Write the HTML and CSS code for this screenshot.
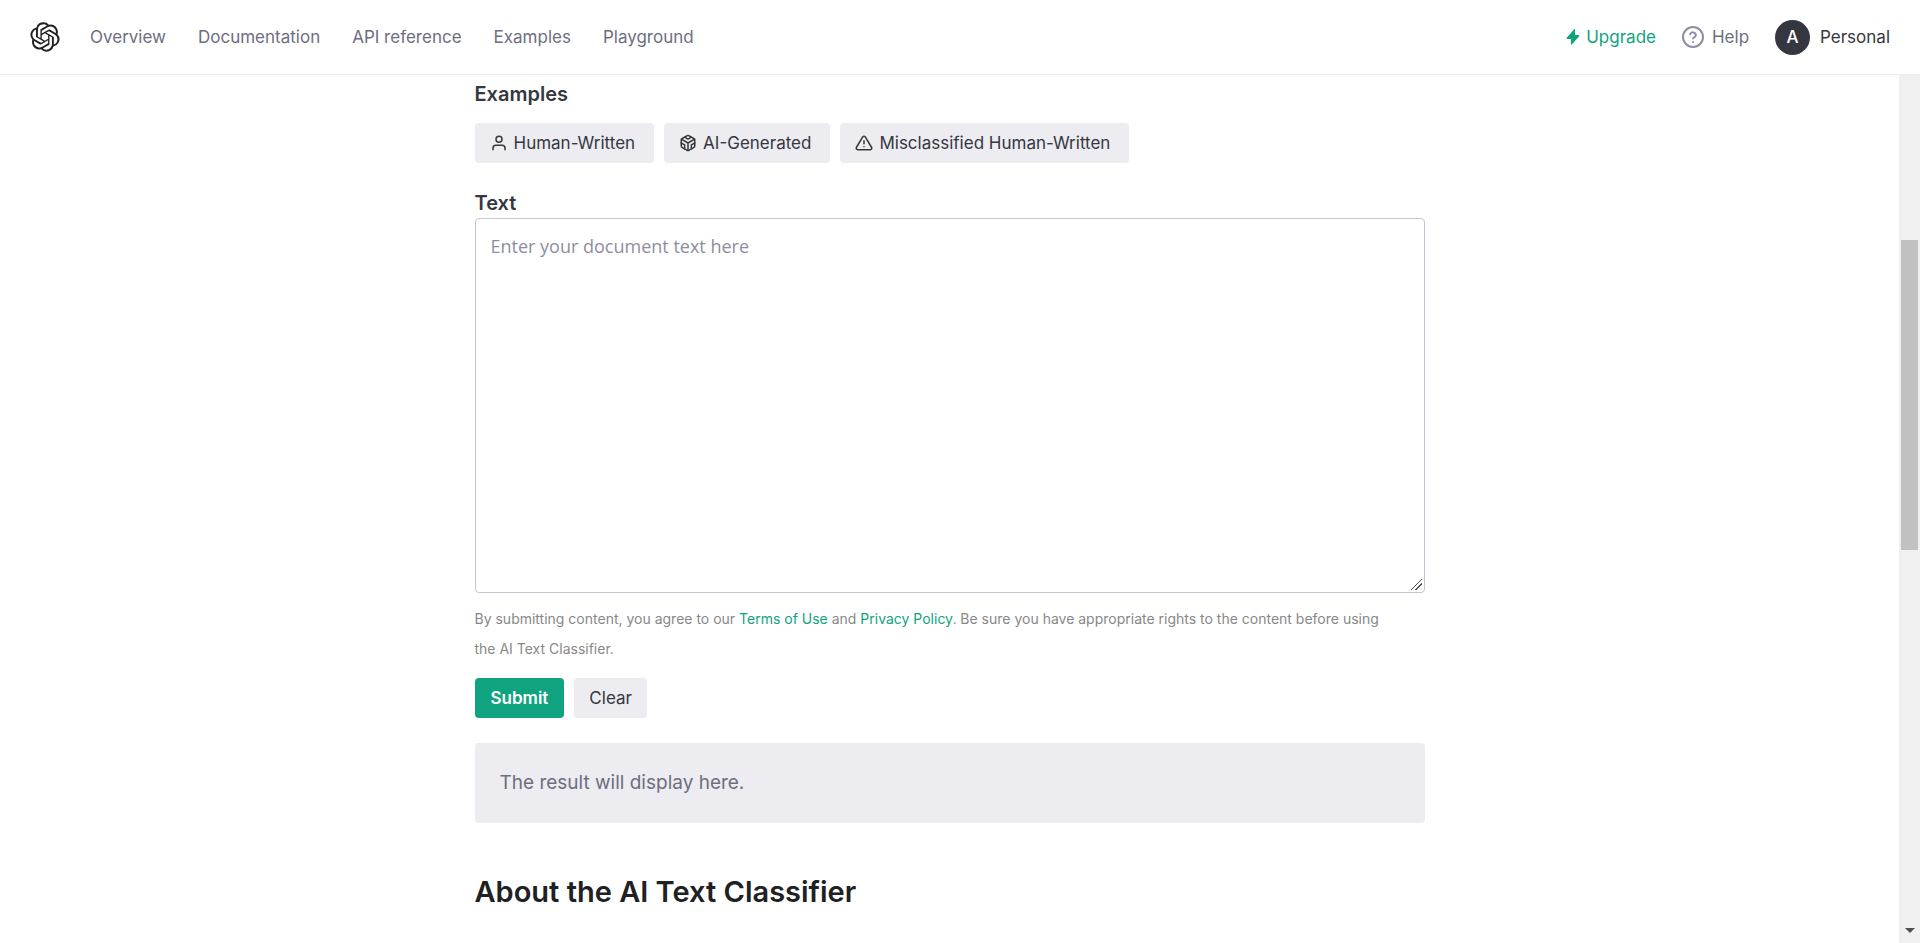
FILE: index.html
```html
<!DOCTYPE html>
<html lang="en">
<head>
  <meta charset="UTF-8" />
  <meta name="viewport" content="width=device-width, initial-scale=1.0"/>
  <title>AI Text Classifier - OpenAI API</title>
  <link rel="stylesheet" href="styles.css">
</head>
<body>
  <header class="topbar">
    <a href="#" class="logo" aria-label="OpenAI">
      <svg width="30" height="30" viewBox="0 0 41 41" fill="currentColor"><path d="M37.532 16.87a9.963 9.963 0 0 0-.856-8.184 10.078 10.078 0 0 0-10.855-4.835A9.964 9.964 0 0 0 18.306.5a10.079 10.079 0 0 0-9.614 6.977 9.967 9.967 0 0 0-6.664 4.834 10.08 10.08 0 0 0 1.24 11.817 9.965 9.965 0 0 0 .856 8.185 10.079 10.079 0 0 0 10.855 4.835 9.965 9.965 0 0 0 7.516 3.35 10.078 10.078 0 0 0 9.617-6.981 9.967 9.967 0 0 0 6.663-4.834 10.079 10.079 0 0 0-1.243-11.813zM22.498 37.886a7.474 7.474 0 0 1-4.799-1.735c.061-.033.168-.091.237-.134l7.964-4.6a1.294 1.294 0 0 0 .655-1.134V19.054l3.366 1.944a.12.12 0 0 1 .066.092v9.299a7.505 7.505 0 0 1-7.49 7.496zM6.392 31.006a7.471 7.471 0 0 1-.894-5.023c.06.036.162.099.237.141l7.964 4.6a1.297 1.297 0 0 0 1.308 0l9.724-5.614v3.888a.12.12 0 0 1-.048.103L16.632 33.75a7.504 7.504 0 0 1-10.24-2.744zM4.297 13.62A7.469 7.469 0 0 1 8.2 10.333c0 .068-.004.19-.004.274v9.201a1.294 1.294 0 0 0 .654 1.132l9.723 5.614-3.366 1.944a.12.12 0 0 1-.114.01L7.04 23.856a7.504 7.504 0 0 1-2.743-10.237zm27.658 6.437-9.724-5.615 3.367-1.943a.121.121 0 0 1 .113-.01l8.052 4.648a7.498 7.498 0 0 1-1.158 13.528v-9.476a1.293 1.293 0 0 0-.65-1.132zm3.35-5.043c-.059-.037-.162-.099-.236-.141l-7.965-4.6a1.298 1.298 0 0 0-1.308 0l-9.723 5.614v-3.888a.12.12 0 0 1 .048-.103l8.05-4.645a7.497 7.497 0 0 1 11.135 7.763zm-21.063 6.929-3.367-1.944a.12.12 0 0 1-.065-.092v-9.299a7.497 7.497 0 0 1 12.293-5.756 6.94 6.94 0 0 0-.236.134l-7.965 4.6a1.294 1.294 0 0 0-.654 1.132l-.006 11.225zm1.829-3.943 4.33-2.501 4.332 2.5v5l-4.331 2.5-4.331-2.5v-5z"/></svg>
    </a>
    <nav class="nav-links">
      <a href="#">Overview</a>
      <a href="#">Documentation</a>
      <a href="#">API reference</a>
      <a href="#">Examples</a>
      <a href="#">Playground</a>
    </nav>
    <div class="nav-right">
      <a href="#" class="upgrade">
        <svg width="14" height="16" viewBox="0 0 14 16" fill="currentColor"><path d="M8.2.2C8.6-.1 9 .1 9 .6V6h3.600c.7 0 1 .7.6 1.200L5.800 15.600c-.4.4-.8.2-.8-.3V10H1.300c-.7 0-1-.7-.6-1.200z"/></svg>
        Upgrade
      </a>
      <a href="#" class="help">
        <svg width="22" height="22" viewBox="0 0 22 22" fill="none" stroke="currentColor" stroke-width="2" stroke-linecap="round" stroke-linejoin="round"><circle cx="11" cy="11" r="10"/><path d="M8.200 8.200a2.900 2.900 0 0 1 5.600 1c0 1.900-2.800 2.500-2.800 3.400"/><path d="M11 15.900v.1"/></svg>
        Help
      </a>
      <button class="account"><span class="avatar">A</span>Personal</button>
    </div>
  </header>

  <div class="page">
    <main>
      <div class="content">
        <h2>Examples</h2>
        <div class="button-row examples">
          <button class="btn">
            <svg class="icon" viewBox="0 0 24 24"><path d="M20 21v-2a4 4 0 0 0-4-4H8a4 4 0 0 0-4 4v2"/><circle cx="12" cy="7" r="4"/></svg>
            Human-Written
          </button>
          <button class="btn">
            <svg class="icon" viewBox="0 0 24 24"><path d="M21 16V8a2 2 0 0 0-1-1.730l-7-4a2 2 0 0 0-2 0l-7 4A2 2 0 0 0 3 8v8a2 2 0 0 0 1 1.730l7 4a2 2 0 0 0 2 0l7-4A2 2 0 0 0 21 16z"/><path d="M7.500 4.210 12 6.810l4.500-2.600M7.500 19.790V14.600L3 12M21 12l-4.500 2.600v5.190M3.270 6.960 12 12.010l8.730-5.050M12 22.080V12"/></svg>
            AI-Generated
          </button>
          <button class="btn">
            <svg class="icon" viewBox="0 0 24 24"><path d="M10.290 3.860 1.820 18a2 2 0 0 0 1.710 3h16.940a2 2 0 0 0 1.710-3L13.710 3.860a2 2 0 0 0-3.420 0z"/><path d="M12 9v4M12 17h.01"/></svg>
            Misclassified Human-Written
          </button>
        </div>

        <label for="docText">Text</label>
        <textarea id="docText" placeholder="Enter your document text here"></textarea>
        <p class="terms">By submitting content, you agree to our <a href="#">Terms of Use</a> and <a href="#">Privacy Policy</a>. Be sure you have appropriate rights to the content before using the AI Text Classifier.</p>

        <div class="button-row">
          <button class="btn primary">Submit</button>
          <button class="btn">Clear</button>
        </div>

        <div class="result">The result will display here.</div>

        <h1>About the AI Text Classifier</h1>
      </div>
    </main>
    <div class="scrollbar">
      <div class="thumb"></div>
      <div class="arrow-down"></div>
    </div>
  </div>
</body>
</html>
```
FILE: styles.css
```css
* {
  box-sizing: border-box;
}

body {
  margin: 0;
  height: 100vh;
  display: flex;
  flex-direction: column;
  overflow: hidden;
  font-family: Inter, "Liberation Sans", sans-serif;
  font-size: 17px;
  color: #353740;
  background: #fff;
}

a {
  color: #10a37f;
  text-decoration: none;
}

button {
  font-family: inherit;
  font-size: inherit;
  color: inherit;
  border: none;
  cursor: pointer;
}

/* Top bar */
.topbar {
  flex: none;
  display: flex;
  align-items: center;
  height: 75px;
  padding: 0 30px;
  border-bottom: 1px solid #ececf1;
}

.logo {
  display: flex;
  margin-right: 30px;
  color: #202123;
}

.nav-links {
  display: flex;
  gap: 32px;
}

.nav-links a, .nav-right .help {
  color: #6e6e80;
}

.nav-right {
  display: flex;
  align-items: center;
  gap: 26px;
  margin-left: auto;
}

.upgrade, .help, .account {
  display: flex;
  align-items: center;
}

.upgrade { gap: 6px; }
.help { gap: 8px; }
.help svg { color: #8e8ea0; }

.account {
  gap: 10px;
  padding: 0;
  background: none;
}

.avatar {
  width: 35px;
  height: 35px;
  line-height: 35px;
  border-radius: 50%;
  background: #353740;
  color: #fff;
  font-size: 17px;
  font-weight: 500;
}

/* Page body */
.page {
  flex: 1;
  display: flex;
  min-height: 0;
}

main {
  flex: 1;
  overflow: hidden;
}

.content {
  max-width: 950px;
  margin: 0 auto;
}

h2, label {
  display: block;
  margin: 0;
  font-size: 20px;
  line-height: 30px;
  font-weight: 600;
}

h2 {
  padding-top: 4px;
}

.button-row {
  display: flex;
  gap: 10px;
}

.examples {
  margin: 14px 0 25px;
}

.btn {
  display: flex;
  align-items: center;
  gap: 6px;
  height: 40px;
  padding: 0 15px;
  border-radius: 4px;
  background: #ececf1;
}

.examples .btn {
  padding-right: 19px;
}

.btn.primary {
  padding: 0 16px;
  background: #10a37f;
  color: #fff;
  font-weight: 600;
}

.icon {
  width: 18px;
  height: 18px;
  fill: none;
  stroke: currentColor;
  stroke-width: 2;
  stroke-linecap: round;
  stroke-linejoin: round;
}

textarea {
  display: block;
  width: 100%;
  height: 375px;
  padding: 12px 15px;
  border: 1px solid #c5c5d2;
  border-radius: 4px;
  font-family: "Open Sans", sans-serif;
  font-size: 18px;
  line-height: 30px;
}

textarea::placeholder {
  color: #8e8ea0;
}

textarea::-webkit-resizer {
  background: linear-gradient(135deg, transparent 46%, #505050 46%, #505050 54%, transparent 54%, transparent 68%, #505050 68%, #505050 76%, transparent 76%) 2px 2px / 11px 11px no-repeat;
}

.terms {
  margin: 11px 0 14px;
  padding-right: 30px;
  font-size: 14px;
  line-height: 30px;
  color: #888;
}

.result {
  margin-top: 25px;
  padding: 25px;
  border-radius: 4px;
  background: #ececf1;
  color: #6e6e80;
  font-size: 19px;
  line-height: 30px;
}

h1 {
  margin: 49px 0 0;
  font-size: 29px;
  line-height: 40px;
  font-weight: 600;
  color: #202123;
}

/* Scrollbar column */
.scrollbar {
  display: flex;
  flex-direction: column;
  justify-content: space-between;
  align-items: center;
  width: 21px;
  padding: 165px 0 10px;
  background: #f0f0f0;
}

.thumb {
  width: 17px;
  height: 310px;
  background: #c1c1c1;
}

.arrow-down {
  border: 5px solid transparent;
  border-top-color: #505050;
  border-bottom: none;
}
```
